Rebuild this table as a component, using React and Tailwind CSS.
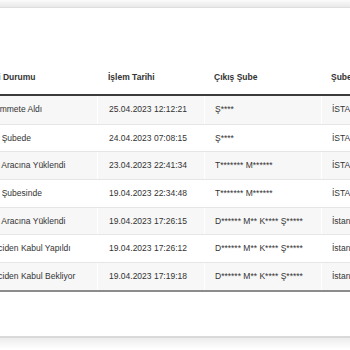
const ROWS = [
  { status: 'Kurye Zimmete Aldı', date: '25.04.2023 12:12:21', from: 'Ş****', to: 'İSTANBUL AKTARMA' },
  { status: 'Transfer Şubede', date: '24.04.2023 07:08:15', from: 'Ş****', to: 'İSTANBUL AKTARMA' },
  { status: 'Transfer Aracına Yüklendi', date: '23.04.2023 22:41:34', from: 'T******* M******', to: 'İSTANBUL AKTARMA' },
  { status: 'Transfer Şubesinde', date: '19.04.2023 22:34:48', from: 'T******* M******', to: 'İSTANBUL AKTARMA' },
  { status: 'Transfer Aracına Yüklendi', date: '19.04.2023 17:26:15', from: 'D****** M** K**** Ş*****', to: 'İstanbul Aktarma' },
  { status: 'Göndericiden Kabul Yapıldı', date: '19.04.2023 17:26:12', from: 'D****** M** K**** Ş*****', to: 'İstanbul Aktarma' },
  { status: 'Göndericiden Kabul Bekliyor', date: '19.04.2023 17:19:18', from: 'D****** M** K**** Ş*****', to: 'İstanbul Aktarma' },
]

const COLS = 'grid grid-cols-[139px_107px_117px_120px]'

export default function App() {
  return (
    <div className="w-[350px] h-[350px] bg-white overflow-hidden text-[8.5px] text-[#333] font-['Liberation_Sans',Arial,sans-serif]">
      {/* top bar */}
      <div className="h-[8px] bg-gradient-to-b from-[#fbfbfb] to-[#e9e9e9] border-b border-[#dedede]" />

      <div className="h-[330px] border-b-2 border-[#d9d9d9] overflow-hidden">
        <div className="-ml-[42px] w-[483px] pt-[52px]">
          {/* header */}
          <div className={`${COLS} h-[36px] items-center font-bold border-b-2 border-[#3c3c3c]`}>
            <div className="pl-[10px] whitespace-nowrap">Gönderi Durumu</div>
            <div className="pl-[11px]">İşlem Tarihi</div>
            <div className="pl-[10px]">Çıkış Şube</div>
            <div className="pl-[10px]">Şube</div>
          </div>

          {ROWS.map((r, i) => (
            <div
              key={i}
              className={`${COLS} h-[27.7px] items-stretch ${i > 0 ? 'border-t border-[#e6e6e6]' : ''} ${i % 2 === 0 ? 'bg-[#f7f7f7]' : 'bg-white'}`}
            >
              <div className="pl-[10px] flex items-center whitespace-nowrap">{r.status}</div>
              <div className="pl-[11px] flex items-center border-l border-white whitespace-nowrap">{r.date}</div>
              <div className="pl-[10px] flex items-center border-l border-white whitespace-nowrap">{r.from}</div>
              <div className="pl-[10px] flex items-center border-l border-white whitespace-nowrap">{r.to}</div>
            </div>
          ))}
          <div className="h-[2px] bg-[#8c8c8c]" />
        </div>
      </div>

      <div className="h-[11px] bg-gradient-to-b from-[#ececec] to-white" />
    </div>
  )
}
